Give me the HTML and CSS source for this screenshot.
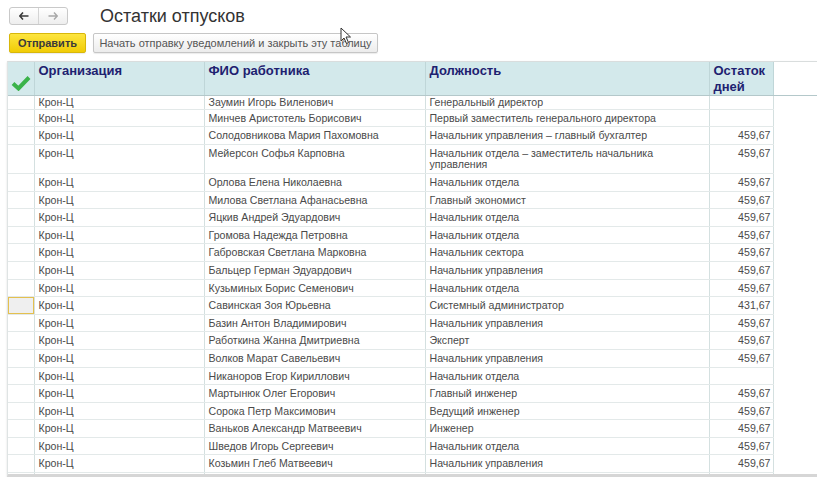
FILE: index.html
```html
<!DOCTYPE html>
<html lang="ru">
<head>
<meta charset="UTF-8" />
<title>Остатки отпусков</title>
<link rel="stylesheet" href="styles.css">
</head>
<body>

<div class="topbar">
    <div class="nav">
        <span class="nav-btn">
            <svg width="10" height="8" viewBox="0 0 10 8"><path d="M4 0.5 L0.8 4 L4 7.5 M1 4 H9.5" fill="none" stroke="#3a3a3a" stroke-width="1.6"/></svg>
        </span>
        <span class="nav-btn">
            <svg width="10" height="8" viewBox="0 0 10 8"><path d="M6 0.5 L9.2 4 L6 7.5 M9 4 H0.5" fill="none" stroke="#a8a8a8" stroke-width="1.4"/></svg>
        </span>
    </div>
    <h1 class="title">Остатки отпусков</h1>
</div>

<div class="actions">
    <button class="btn btn-primary">Отправить</button>
    <button class="btn btn-wide">Начать отправку уведомлений и закрыть эту таблицу</button>
</div>

<!-- курсор мыши поверх кнопки -->
<svg class="cursor" width="12" height="18" viewBox="0 0 12 18">
    <path d="M1 1 L1 14 L4 11 L6.5 16.5 L8.5 15.5 L6 10 L10.5 10 Z" fill="#fff" stroke="#333" stroke-width="1"/>
</svg>

<div class="grid">
    <table>
        <colgroup>
            <col class="c-check">
            <col class="c-org">
            <col class="c-fio">
            <col class="c-pos">
            <col class="c-days">
            <col>
        </colgroup>
        <thead>
            <tr>
                <th class="check">
                    <svg width="20" height="16" viewBox="0 0 20 16"><path d="M2 8.5 L7.5 13.5 L18 2.5" fill="none" stroke="#3bb34a" stroke-width="4" stroke-linejoin="miter"/></svg>
                </th>
                <th>Организация</th>
                <th>ФИО работника</th>
                <th>Должность</th>
                <th>Остаток дней</th>
                <th class="filler"></th>
            </tr>
        </thead>
        <tbody>
            <tr class="first"><td></td><td>Крон-Ц</td><td>Заумин Игорь Виленович</td><td>Генеральный директор</td><td class="num"></td><td class="filler"></td></tr>
            <tr><td></td><td>Крон-Ц</td><td>Минчев Аристотель Борисович</td><td>Первый заместитель генерального директора</td><td class="num"></td><td class="filler"></td></tr>
            <tr><td></td><td>Крон-Ц</td><td>Солодовникова Мария Пахомовна</td><td>Начальник управления – главный бухгалтер</td><td class="num">459,67</td><td class="filler"></td></tr>
            <tr><td></td><td>Крон-Ц</td><td>Мейерсон Софья Карповна</td><td>Начальник отдела – заместитель начальника управления</td><td class="num">459,67</td><td class="filler"></td></tr>
            <tr><td></td><td>Крон-Ц</td><td>Орлова Елена Николаевна</td><td>Начальник отдела</td><td class="num">459,67</td><td class="filler"></td></tr>
            <tr><td></td><td>Крон-Ц</td><td>Милова Светлана Афанасьевна</td><td>Главный экономист</td><td class="num">459,67</td><td class="filler"></td></tr>
            <tr><td></td><td>Крон-Ц</td><td>Яцкив Андрей Эдуардович</td><td>Начальник отдела</td><td class="num">459,67</td><td class="filler"></td></tr>
            <tr><td></td><td>Крон-Ц</td><td>Громова Надежда Петровна</td><td>Начальник отдела</td><td class="num">459,67</td><td class="filler"></td></tr>
            <tr><td></td><td>Крон-Ц</td><td>Габровская Светлана Марковна</td><td>Начальник сектора</td><td class="num">459,67</td><td class="filler"></td></tr>
            <tr><td></td><td>Крон-Ц</td><td>Бальцер Герман Эдуардович</td><td>Начальник управления</td><td class="num">459,67</td><td class="filler"></td></tr>
            <tr><td></td><td>Крон-Ц</td><td>Кузьминых Борис Семенович</td><td>Начальник отдела</td><td class="num">459,67</td><td class="filler"></td></tr>
            <tr><td class="current"></td><td>Крон-Ц</td><td>Савинская Зоя Юрьевна</td><td>Системный администратор</td><td class="num">431,67</td><td class="filler"></td></tr>
            <tr><td></td><td>Крон-Ц</td><td>Базин Антон Владимирович</td><td>Начальник управления</td><td class="num">459,67</td><td class="filler"></td></tr>
            <tr><td></td><td>Крон-Ц</td><td>Работкина Жанна Дмитриевна</td><td>Эксперт</td><td class="num">459,67</td><td class="filler"></td></tr>
            <tr><td></td><td>Крон-Ц</td><td>Волков Марат Савельевич</td><td>Начальник управления</td><td class="num">459,67</td><td class="filler"></td></tr>
            <tr><td></td><td>Крон-Ц</td><td>Никаноров Егор Кириллович</td><td>Начальник отдела</td><td class="num"></td><td class="filler"></td></tr>
            <tr><td></td><td>Крон-Ц</td><td>Мартынюк Олег Егорович</td><td>Главный инженер</td><td class="num">459,67</td><td class="filler"></td></tr>
            <tr><td></td><td>Крон-Ц</td><td>Сорока Петр Максимович</td><td>Ведущий инженер</td><td class="num">459,67</td><td class="filler"></td></tr>
            <tr><td></td><td>Крон-Ц</td><td>Ваньков Александр Матвеевич</td><td>Инженер</td><td class="num">459,67</td><td class="filler"></td></tr>
            <tr><td></td><td>Крон-Ц</td><td>Шведов Игорь Сергеевич</td><td>Начальник отдела</td><td class="num">459,67</td><td class="filler"></td></tr>
            <tr><td></td><td>Крон-Ц</td><td>Козьмин Глеб Матвеевич</td><td>Начальник управления</td><td class="num">459,67</td><td class="filler"></td></tr>
            <tr class="blank"><td></td><td></td><td></td><td></td><td class="num"></td><td class="filler"></td></tr>
        </tbody>
    </table>
</div>

</body>
</html>
```

FILE: styles.css
```css
body {
margin: 0;
background: #fff;
font-family: 'Liberation Sans', Arial, sans-serif;
color: #4a4a4a;
position: relative;
overflow: hidden;
}

/* Верхняя панель: навигация и заголовок */
.topbar {
display: flex;
align-items: center;
padding: 7px 0 0 9px;
height: 18px;
}

.nav {
display: flex;
height: 16px;
border: 1px solid #c9c9c9;
border-radius: 3px;
background: linear-gradient(#ffffff, #eeeeee);
}

.nav-btn {
width: 28px;
display: flex;
align-items: center;
justify-content: center;
}

.nav-btn + .nav-btn {
border-left: 1px solid #d4d4d4;
}

.title {
margin: 0 0 0 32px;
font-size: 18px;
font-weight: normal;
color: #333;
}

/* Кнопки */
.actions {
display: flex;
gap: 7px;
padding: 8px 0 0 9px;
}

.btn {
height: 20px;
padding: 0;
border: 1px solid #c6c6c6;
border-radius: 2px;
background: linear-gradient(#ffffff, #ececec);
font-family: 'Liberation Sans', Arial, sans-serif;
font-size: 11px;
color: #555;
box-shadow: 0 1px 1px rgba(0,0,0,0.08);
}

.btn-primary {
width: 77px;
background: linear-gradient(#fde53f, #f1cc06);
border-color: #d8b70a;
font-weight: bold;
color: #3a3a3a;
}

.btn-wide {
width: 285px;
}

.cursor {
position: absolute;
left: 340px;
top: 27px;
}

/* Таблица */
.grid {
margin: 8px 0 0 7px;
height: 412px;
overflow: hidden;
border-top: 1px solid #d9dddd;
border-left: 1px solid #dfe4e4;
border-bottom: 3px solid #d6d6d6;
box-shadow: 0 1px 2px rgba(0,0,0,0.12);
}

table {
width: 820px;
border-collapse: collapse;
table-layout: fixed;
font-size: 10.6px;
}

.c-check { width: 26px; }
.c-org { width: 170px; }
.c-fio { width: 221px; }
.c-pos { width: 284px; }
.c-days { width: 64px; }

th {
height: 31px;
padding: 1px 3px 0 4px;
background: #d3e9eb;
border-left: 1px solid #bfd6d8;
border-bottom: 1px solid #b4c8ca;
text-align: left;
vertical-align: top;
font-size: 13px;
line-height: 16px;
font-weight: bold;
color: #1e2170;
}

th.check {
border-left: none;
padding: 0;
vertical-align: bottom;
}

th.check svg {
display: block;
margin: 0 0 4px 3px;
}

th.filler {
background: #fff;
border-left: 1px solid #bfd6d8;
}

td {
padding: 3px 3px 2px 4px;
line-height: 11.6px;
vertical-align: top;
border-left: 1px solid #d4e0e0;
border-bottom: 1px solid #e3e9e9;
overflow: hidden;
}

td:first-child {
border-left: none;
}

td.filler {
border-left: 1px solid #d4e0e0;
border-bottom: none;
}

td.num {
text-align: right;
padding-right: 2px;
}

tr.first td {
padding-top: 1px;
padding-bottom: 0;
}

tr.blank td {
height: 12px;
}

td.current {
background: #efefef;
outline: 1px solid #e4c04f;
outline-offset: -1px;
}
```
